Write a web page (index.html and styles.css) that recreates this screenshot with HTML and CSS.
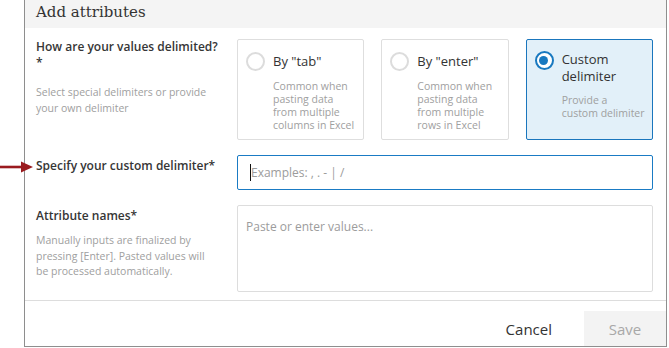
FILE: index.html
```html
<!DOCTYPE html>
<html lang="en">
<head>
    <meta charset="UTF-8">
    <title>Add attributes</title>
    <link rel="stylesheet" href="styles.css">
</head>
<body>
<!-- red pointer arrow, annotation over the page -->
<svg class="pointer" width="36" height="14" viewBox="0 0 36 14">
    <path d="M0 7 H24" stroke="#9a1b1f" stroke-width="2.6"/>
    <path d="M21 1.5 L33 7 L21 12.5 Z" fill="#9a1b1f"/>
</svg>

<div class="dialog">
    <div class="dialog-head">Add attributes</div>

    <div class="dialog-body">
        <div class="row">
            <div class="label-col">
                <p class="label label-top">How are your values delimited?<br>*</p>
                <p class="hint hint-first">Select special delimiters or provide your own delimiter</p>
            </div>
            <div class="cards">
                <div class="card">
                    <span class="radio"></span>
                    <div class="card-text">
                        <p class="card-title">By "tab"</p>
                        <p class="card-desc">Common when pasting data from multiple columns in Excel</p>
                    </div>
                </div>
                <div class="card">
                    <span class="radio"></span>
                    <div class="card-text">
                        <p class="card-title">By "enter"</p>
                        <p class="card-desc">Common when pasting data from multiple rows in Excel</p>
                    </div>
                </div>
                <div class="card selected">
                    <span class="radio on"></span>
                    <div class="card-text">
                        <p class="card-title">Custom delimiter</p>
                        <p class="card-desc">Provide a custom&nbsp;delimiter</p>
                    </div>
                </div>
            </div>
        </div>

        <div class="row">
            <div class="label-col">
                <p class="label label-inline">Specify your custom delimiter*</p>
            </div>
            <div class="field-wrap">
                <input type="text" class="field focus" placeholder="Examples: , . - | /">
                <span class="caret"></span>
            </div>
        </div>

        <div class="row">
            <div class="label-col">
                <p class="label label-inline">Attribute names*</p>
                <p class="hint">Manually inputs are finalized by pressing [Enter]. Pasted values will be processed automatically.</p>
            </div>
            <textarea class="area" placeholder="Paste or enter values..."></textarea>
        </div>
    </div>

    <div class="dialog-foot">
        <button class="btn btn-cancel">Cancel</button>
        <button class="btn btn-save">Save</button>
    </div>
</div>
</body>
</html>
```

FILE: styles.css
```css
*{
    margin: 0;
    padding: 0;
    box-sizing: border-box;
}
body{
    background: #fff;
    font-family: "Open Sans", "Noto Sans", sans-serif;
    color: #333;
}
.pointer{
    position: absolute;
    left: 0;
    top: 160px;
}
.dialog{
    margin-left: 24px;
    width: 643px;
    height: 347px;
    border: 1px solid #8e8e8e;
    border-top: none;
    display: flex;
    flex-direction: column;
}
.dialog-head{
    height: 29px;
    background: #f4f4f4;
    padding: 1px 11px 0;
    font-family: "DejaVu Serif", serif;
    font-size: 15px;
    line-height: 22px;
    color: #333;
}
.dialog-body{
    padding: 11px 13px 8px 11px;
    display: flex;
    flex-direction: column;
    gap: 15px;
    border-bottom: 1px solid #ddd;
}
.row{
    display: flex;
}
.label-col{
    width: 201px;
    flex-shrink: 0;
}
.label{
    font-size: 12px;
    font-weight: 600;
    line-height: 16px;
    color: #363636;
}
.label-top{
    padding-top: 0;
}
.label-inline{
    padding-top: 3px;
}
.hint{
    max-width: 180px;
    font-size: 10.5px;
    line-height: 15.5px;
    color: #a0a0a0;
    margin-top: 9px;
}
.hint-first{
    margin-top: 13px;
    line-height: 16px;
}
.cards{
    flex: 1;
    display: grid;
    grid-template-columns: repeat(3, 1fr);
    gap: 17px;
    height: 101px;
}
.card{
    border: 1px solid #dedede;
    border-radius: 2px;
    padding: 11px 0 0 8px;
    display: flex;
    gap: 8px;
}
.card.selected{
    background: #e2f0f9;
    border-color: #1a76bd;
}
.card-text{
    width: 86px;
}
.radio{
    width: 19px;
    height: 19px;
    flex-shrink: 0;
    border: 2px solid #dcdcdc;
    border-radius: 50%;
    margin-top: 1px;
    background: #fff;
    position: relative;
}
.radio.on{
    border: 2.5px solid #1879c0;
    margin-top: 0;
}
.radio.on::after{
    content: "";
    position: absolute;
    left: 2.5px;
    top: 2.5px;
    width: 9px;
    height: 9px;
    border-radius: 50%;
    background: #1879c0;
}
.card-title{
    font-size: 13px;
    line-height: 17px;
    color: #333;
    margin-top: 2px;
}
.card-desc{
    font-size: 10.5px;
    line-height: 13px;
    color: #a0a0a0;
    margin-top: 10px;
}
.selected .card-title{
    margin-top: 0;
}
.selected .card-desc{
    margin-top: 9px;
}
.field-wrap{
    flex: 1;
    position: relative;
}
.field{
    width: 100%;
    height: 35px;
    border: 1px solid #ddd;
    border-radius: 2px;
    padding: 0 13px;
    font-family: "Open Sans", "Noto Sans", sans-serif;
    font-size: 12px;
    outline: none;
}
.field.focus{
    border-color: #1a7bc4;
}
.field::placeholder, .area::placeholder{
    color: #9c9c9c;
}
.caret{
    position: absolute;
    left: 13px;
    top: 9px;
    width: 1px;
    height: 17px;
    background: #111;
}
.area{
    flex: 1;
    height: 87px;
    border: 1px solid #ddd;
    border-radius: 2px;
    padding: 13px 8px;
    font-family: "Open Sans", "Noto Sans", sans-serif;
    font-size: 12px;
    line-height: 16px;
    resize: none;
    outline: none;
}
.dialog-foot{
    flex: 1;
    display: flex;
    justify-content: flex-end;
    align-items: flex-end;
    padding-top: 10px;
    gap: 16px;
}
.btn{
    height: 35px;
    border: none;
    background: none;
    font-family: "Open Sans", "Noto Sans", sans-serif;
    font-size: 15px;
    color: #333;
    cursor: pointer;
}
.btn-cancel{
    padding: 0 16px;
}
.btn-save{
    width: 82px;
    background: #f3f3f3;
    color: #a8a8a8;
}
```
